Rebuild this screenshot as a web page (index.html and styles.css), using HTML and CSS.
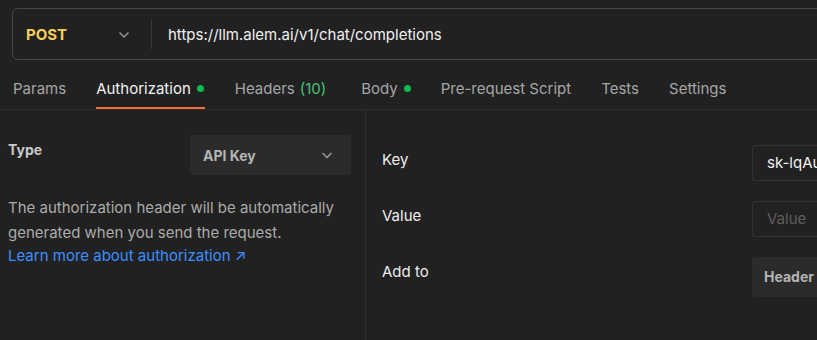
FILE: index.html
```html
<!DOCTYPE html>
<html lang="en">
<head>
    <meta charset="UTF-8">
    <meta name="viewport" content="width=device-width, initial-scale=1.0">
    <title>Request - Authorization</title>
    <link rel="stylesheet" href="styles.css">
</head>
<body>
    <!-- Method + URL bar -->
    <div class="url-bar">
        <div class="method">
            <span class="method-name">POST</span>
            <svg class="chevron" width="12" height="12" viewBox="0 0 12 12"><path d="M1.5 4.5 L6 9 L10.5 4.5" fill="none" stroke="#9a9a9a" stroke-width="1.3"/></svg>
        </div>
        <div class="url-text">https://llm.alem.ai/v1/chat/completions</div>
    </div>

    <!-- Request tabs -->
    <div class="tabs">
        <div class="tab">Params</div>
        <div class="tab active">Authorization <span class="dot"></span></div>
        <div class="tab headers">Headers <span class="count">(10)</span></div>
        <div class="tab">Body <span class="dot"></span></div>
        <div class="tab">Pre-request Script</div>
        <div class="tab">Tests</div>
        <div class="tab">Settings</div>
    </div>

    <div class="auth-panel">
        <div class="auth-left">
            <div class="type-row">
                <span class="type-label">Type</span>
                <div class="select">
                    <span>API Key</span>
                    <svg width="12" height="12" viewBox="0 0 12 12"><path d="M1.5 4 L6 8.5 L10.5 4" fill="none" stroke="#a0a0a0" stroke-width="1.3"/></svg>
                </div>
            </div>
            <p class="help">The authorization header will be automatically generated when you send the request.</p>
            <a class="learn" href="#">Learn more about authorization &#8599;</a>
        </div>

        <div class="auth-right">
            <div class="field">
                <span class="field-label">Key</span>
                <div class="input">sk-lqAu</div>
            </div>
            <div class="field">
                <span class="field-label">Value</span>
                <div class="input placeholder">Value</div>
            </div>
            <div class="field">
                <span class="field-label">Add to</span>
                <div class="input select-box">Header</div>
            </div>
        </div>
    </div>
</body>
</html>
```

FILE: styles.css
```css
/* Page base */
body {
    margin: 0;
    background-color: #212121;
    font-family: Inter, "Noto Sans", sans-serif;
    font-size: 15px;
    color: #e6e6e6;
    overflow: hidden;
    height: 340px;
}

/* URL bar */
.url-bar {
    display: flex;
    align-items: center;
    margin: 8px -40px 0 12px;
    height: 50px;
    border: 1px solid #474747;
    border-radius: 6px;
}

.method {
    display: flex;
    align-items: center;
    justify-content: space-between;
    width: 139px;
    height: 30px;
    padding: 0 21px 0 13px;
    box-sizing: border-box;
    border-right: 1px solid #3a3a3a;
}

.method-name {
    color: #f5cf5a;
    font-weight: 700;
}

.url-text {
    padding-left: 16px;
    color: #f0f0f0;
}

/* Tabs */
.tabs {
    display: flex;
    gap: 30px;
    height: 49px;
    padding-left: 13px;
    border-bottom: 1px solid #2f2f2f;
}

.tab {
    display: flex;
    align-items: center;
    gap: 6px;
    color: #a6a6a6;
    border-bottom: 2px solid transparent;
    padding-top: 10px;
}

.tab.active {
    color: #f2f2f2;
    border-bottom-color: #ff6c37;
    padding-right: 1px;
}

.tab.headers {
    margin-right: 5px;
}

.count {
    color: #49c17a;
    margin-left: -1px;
}

.dot {
    width: 7px;
    height: 7px;
    border-radius: 50%;
    background-color: #0cbb52;
}

/* Auth panel */
.auth-panel {
    display: flex;
    height: 230px;
}

.auth-left {
    width: 366px;
    padding: 25px 14px 0 8px;
    box-sizing: border-box;
    border-right: 1px solid #2f2f2f;
}

.type-row {
    display: flex;
    justify-content: space-between;
    align-items: flex-start;
}

.type-label {
    color: #c9c9c9;
    font-weight: 700;
    font-size: 14px;
    margin-top: 6px;
}

.select {
    display: flex;
    align-items: center;
    justify-content: space-between;
    width: 161px;
    height: 40px;
    padding: 0 18px 0 13px;
    box-sizing: border-box;
    background-color: #2b2b2b;
    border-radius: 4px;
    color: #b4b4b4;
    font-weight: 700;
    font-size: 14px;
}

.help {
    margin: 20px 0 0;
    color: #ababab;
    line-height: 25px;
}

.learn {
    display: block;
    color: #3d8fff;
    text-decoration: none;
    line-height: 20px;
    margin-top: 1px;
}

.auth-right {
    flex: 1;
    padding: 35px 0 0 16px;
}

.field {
    display: flex;
    justify-content: space-between;
    align-items: flex-start;
    height: 56px;
}

.field-label {
    color: #ededed;
    margin-top: 5px;
}

.input {
    width: 90px;
    height: 36px;
    line-height: 34px;
    margin-right: -25px;
    padding-left: 14px;
    box-sizing: border-box;
    border: 1px solid #333;
    border-right: none;
    border-radius: 4px 0 0 4px;
    color: #f0f0f0;
    white-space: nowrap;
    overflow: hidden;
}

.input.placeholder {
    color: #5e5e5e;
}

.input.select-box {
    height: 40px;
    line-height: 40px;
    padding-left: 12px;
    border: none;
    background-color: #2b2b2b;
    color: #b4b4b4;
    font-weight: 700;
    font-size: 14px;
}
```
